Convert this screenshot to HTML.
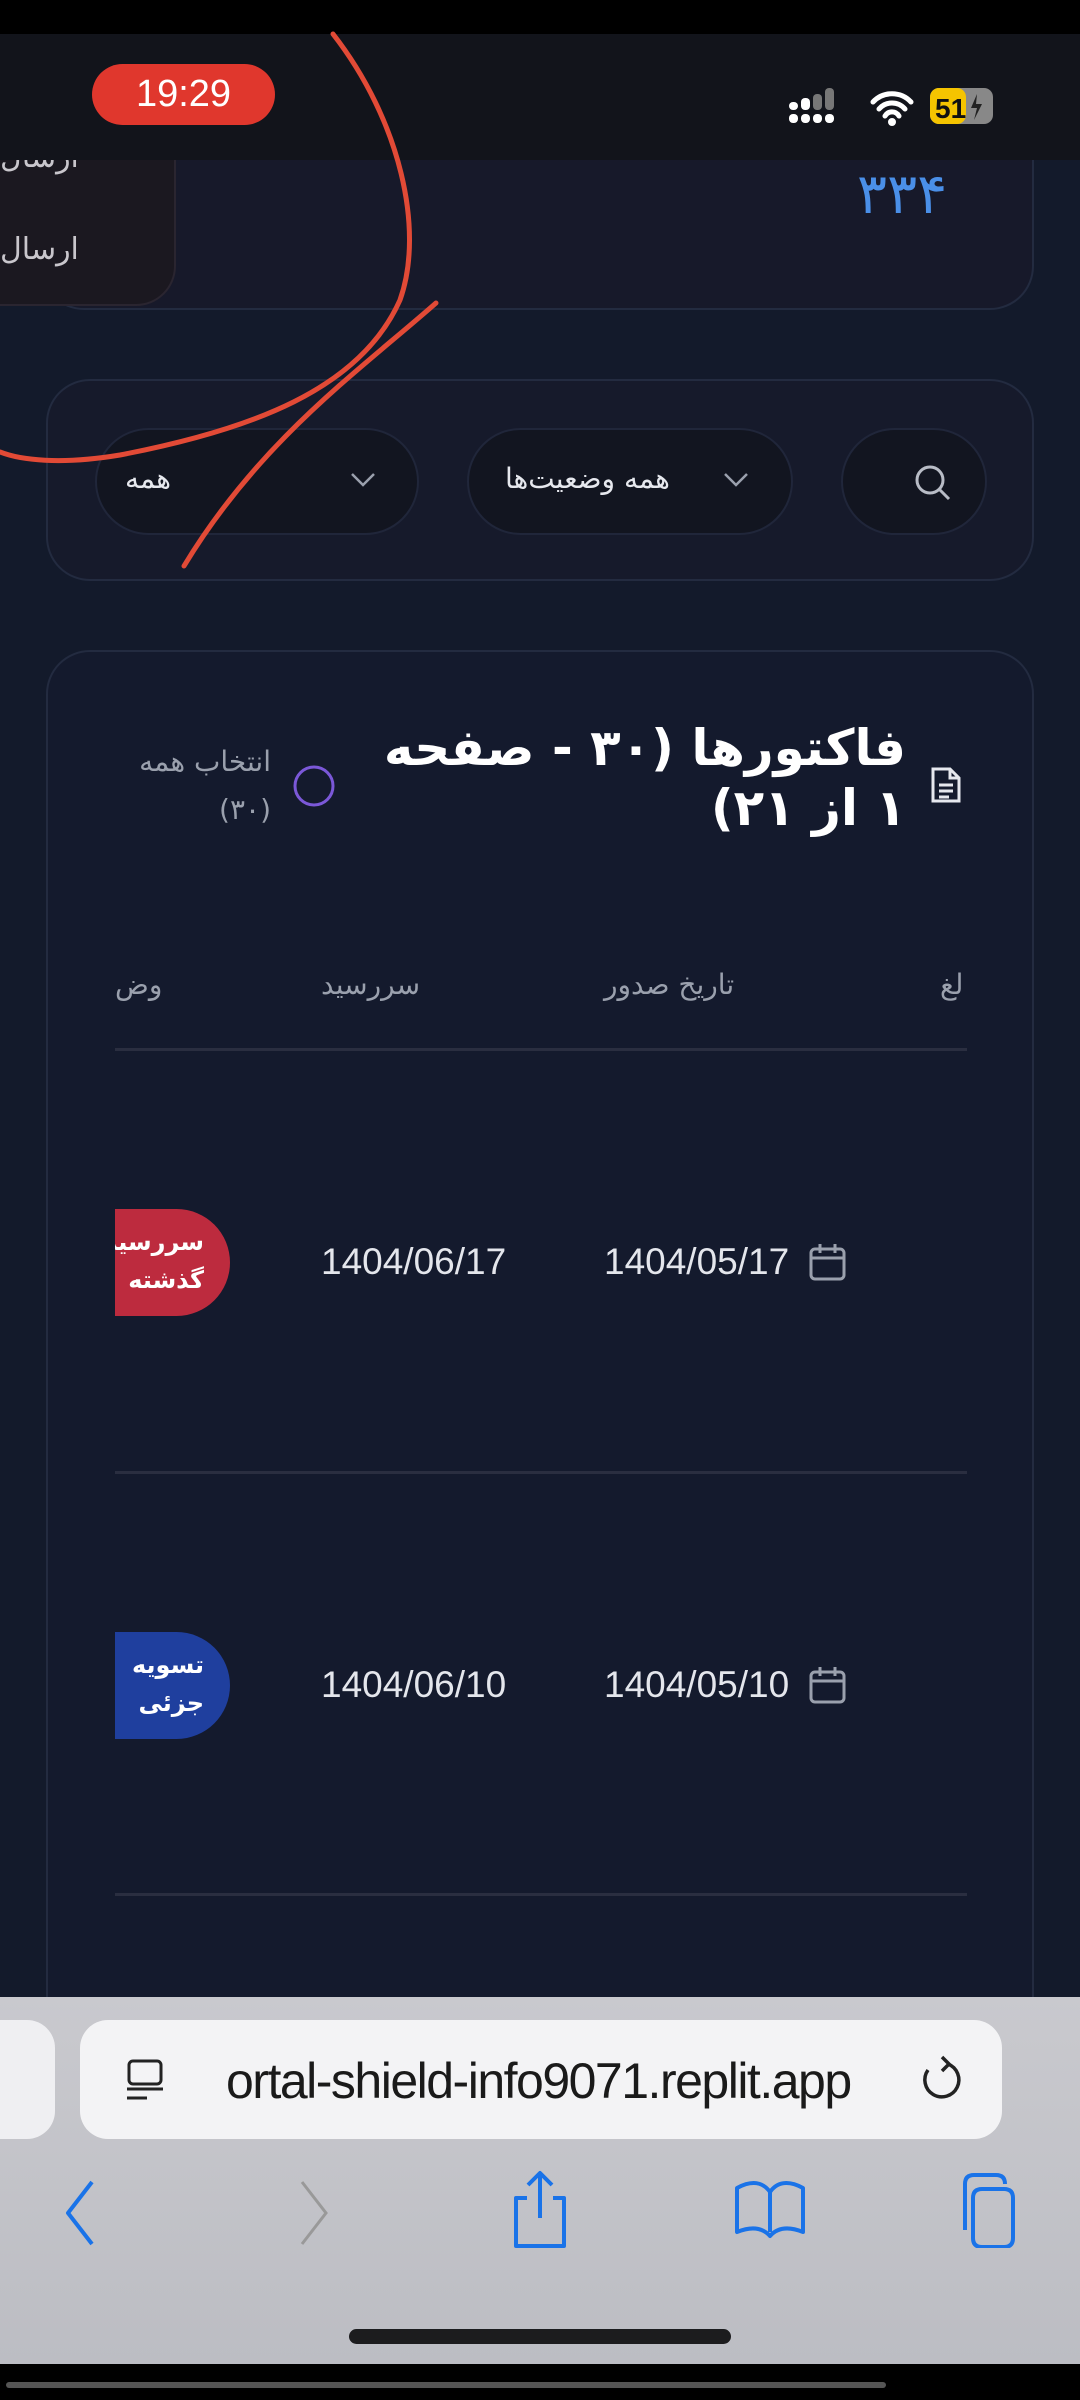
<!DOCTYPE html>
<html><head><meta charset="utf-8">
<style>
*{margin:0;padding:0;box-sizing:border-box}
body{width:1080px;height:2400px;background:#131a2b;position:relative;overflow:hidden;font-family:"Liberation Sans","DejaVu Sans",sans-serif;color:#e6e8ee}
.a{position:absolute}
.fa{font-family:"DejaVu Sans","Liberation Sans",sans-serif;direction:rtl;white-space:nowrap}
.card{border:2px solid #232b40;border-radius:44px}
.pill{background:#121520;border:2px solid #20263a;border-radius:54px}
.date{font-size:37px;color:#e4e6ec}
.hdr{font-size:28px;color:#9aa0ad}
.line{height:3px;background:#2a2e40;left:115px;width:852px}
</style></head><body>
<div class="a" style="left:0;top:0;width:1080px;height:34px;background:#000"></div>
<!-- top card -->
<div class="a card" style="left:40px;top:100px;width:994px;height:210px;background:#17192a;border-top:none;border-radius:0 0 44px 44px"></div>
<div class="a" style="left:0;top:100px;width:176px;height:206px;background:#1b1820;border:2px solid #2a2530;border-left:none;border-top:none;border-radius:0 0 40px 0"></div>
<div class="a fa" style="left:0;top:140px;font-size:30px;color:#c9c6cc">ارسال</div>
<div class="a fa" style="left:0;top:232px;font-size:30px;color:#c9c6cc">ارسال</div>
<div class="a fa" style="left:857px;top:162px;font-size:56px;color:#4a8fe8">۳۳۴</div>
<div class="a" style="left:0;top:34px;width:1080px;height:126px;background:#12141b"></div>
<div class="a" style="left:92px;top:64px;width:183px;height:61px;border-radius:31px;background:#e0372d;color:#fff;font-size:38px;text-align:center;line-height:61px">19:29</div>
<!-- status icons -->
<svg class="a" style="left:785px;top:84px" width="230" height="46" viewBox="0 0 230 46">
<g fill="#fff"><rect x="4" y="18" width="9" height="8" rx="4"/><rect x="4" y="30" width="9" height="9" rx="4"/><rect x="16" y="14" width="9" height="12" rx="4"/><rect x="16" y="30" width="9" height="9" rx="4"/><rect x="28" y="30" width="9" height="9" rx="4"/><rect x="40" y="30" width="9" height="9" rx="4"/></g>
<g fill="#777"><rect x="28" y="10" width="9" height="16" rx="4"/><rect x="40" y="4" width="9" height="22" rx="4"/></g>
<path d="M88 18a26 26 0 0 1 38 0M94 25a17 17 0 0 1 26 0M100 32a8 8 0 0 1 14 0" stroke="#fff" stroke-width="5" fill="none" stroke-linecap="round"/><circle cx="107" cy="38" r="4" fill="#fff"/>
<rect x="145" y="4" width="63" height="36" rx="9" fill="#888"/><rect x="145" y="4" width="36" height="36" rx="9" fill="#f5c400"/>
<text x="150" y="34" font-size="28" font-weight="bold" fill="#111" font-family="Liberation Sans">51</text>
<path d="M192 10l-6 14h6l-3 12 8-16h-6z" fill="#222"/>
</svg>
<!-- filter card -->
<div class="a card" style="left:46px;top:379px;width:988px;height:202px;background:#161a2b"></div>
<div class="a pill" style="left:95px;top:428px;width:324px;height:107px"></div>
<div class="a fa" style="left:125px;top:462px;font-size:28px">همه</div>
<svg class="a" style="left:348px;top:470px" width="30" height="20"><path d="M4 4l11 11 11-11" stroke="#9aa0ad" stroke-width="2.5" fill="none"/></svg>
<div class="a pill" style="left:467px;top:428px;width:326px;height:107px"></div>
<div class="a fa" style="left:505px;top:462px;font-size:28px">همه وضعیت‌ها</div>
<svg class="a" style="left:721px;top:470px" width="30" height="20"><path d="M4 4l11 11 11-11" stroke="#9aa0ad" stroke-width="2.5" fill="none"/></svg>
<div class="a pill" style="left:841px;top:428px;width:146px;height:107px"></div>
<svg class="a" style="left:912px;top:462px" width="44" height="44"><circle cx="18" cy="18" r="13" stroke="#b8bcc6" stroke-width="3" fill="none"/><path d="M28 28l9 9" stroke="#b8bcc6" stroke-width="3"/></svg>
<!-- main card -->
<div class="a card" style="left:46px;top:650px;width:988px;height:1400px;background:#141a2d"></div>
<svg class="a" style="left:930px;top:766px" width="32" height="38"><path d="M3 3h17l9 9v23H3z M20 3v9h9" stroke="#e6e8ee" stroke-width="3" fill="none"/><path d="M9 19h14M9 25h14M9 31h10" stroke="#e6e8ee" stroke-width="3"/></svg>
<div class="a fa" style="right:174px;top:718px;font-size:50px;font-weight:bold;color:#fff;text-align:right;line-height:60px">فاکتورها (۳۰ - صفحه<br>۱ از ۲۱)</div>
<svg class="a" style="left:291px;top:763px" width="46" height="46"><circle cx="23" cy="23" r="19" stroke="#7b58d8" stroke-width="3" fill="none"/></svg>
<div class="a fa" style="right:809px;top:738px;font-size:28px;color:#9aa0ad;text-align:right;line-height:48px">انتخاب همه<br>(۳۰)</div>
<div class="a fa hdr" style="left:940px;top:968px">لغ</div>
<div class="a fa hdr" style="left:604px;top:968px">تاریخ صدور</div>
<div class="a fa hdr" style="left:321px;top:968px">سررسید</div>
<div class="a fa hdr" style="left:115px;top:968px">وض</div>
<div class="a line" style="top:1048px"></div>
<!-- row 1 -->
<div class="a" style="left:115px;top:1209px;width:115px;height:107px;background:#bd2b3e;border-radius:0 54px 54px 0;overflow:hidden"><div class="fa" style="position:absolute;right:26px;top:14px;font-size:24px;font-weight:bold;color:#fff;line-height:38px;text-align:right">سررسید<br>گذشته</div></div>
<div class="a date" style="left:321px;top:1241px">1404/06/17</div>
<div class="a date" style="left:604px;top:1241px">1404/05/17</div>
<svg class="a" style="left:808px;top:1242px" width="40" height="40"><rect x="3" y="7" width="33" height="30" rx="4" stroke="#9aa0ad" stroke-width="3" fill="none"/><path d="M3 16h33M12 2v9M27 2v9" stroke="#9aa0ad" stroke-width="3"/></svg>
<div class="a line" style="top:1471px"></div>
<!-- row 2 -->
<div class="a" style="left:115px;top:1632px;width:115px;height:107px;background:#1f3f9e;border-radius:0 54px 54px 0;overflow:hidden"><div class="fa" style="position:absolute;right:26px;top:14px;font-size:24px;font-weight:bold;color:#fff;line-height:38px;text-align:right">تسویه<br>جزئی</div></div>
<div class="a date" style="left:321px;top:1664px">1404/06/10</div>
<div class="a date" style="left:604px;top:1664px">1404/05/10</div>
<svg class="a" style="left:808px;top:1665px" width="40" height="40"><rect x="3" y="7" width="33" height="30" rx="4" stroke="#9aa0ad" stroke-width="3" fill="none"/><path d="M3 16h33M12 2v9M27 2v9" stroke="#9aa0ad" stroke-width="3"/></svg>
<div class="a line" style="top:1893px"></div>
<!-- safari -->
<div class="a" style="left:0;top:1997px;width:1080px;height:367px;background:linear-gradient(#c9c9ce,#bcbdc3)"></div>
<div class="a" style="left:-30px;top:2020px;width:85px;height:119px;border-radius:28px;background:#efeff2"></div>
<div class="a" style="left:80px;top:2020px;width:922px;height:119px;border-radius:28px;background:#f3f3f5"></div>
<svg class="a" style="left:124px;top:2058px" width="44" height="46"><rect x="5" y="3" width="32" height="23" rx="4" stroke="#222" stroke-width="3" fill="none"/><path d="M3 31h36M3 40h20" stroke="#222" stroke-width="3"/></svg>
<div class="a" style="left:226px;top:2052px;font-size:50px;color:#1a1a1a;letter-spacing:-1.5px">ortal-shield-info9071.replit.app</div>
<svg class="a" style="left:918px;top:2054px" width="46" height="52"><path d="M30 10A17 17 0 1 1 10 16" stroke="#222" stroke-width="3.5" fill="none"/><path d="M24 3l7 7-7 7" stroke="#222" stroke-width="3.5" fill="none"/></svg>
<svg class="a" style="left:0;top:2168px" width="1080" height="80"><g stroke="#1a73e8" stroke-width="4" fill="none" stroke-linejoin="round">
<path d="M92 14L68 45l24 31"/>
<path d="M527 30h-11v48h48V30h-11M540 6v44M528 17l12-12 12 12"/>
<path d="M737 64V20c15-8 26-6 33 4 7-10 18-12 33-4v44c-15-6-26-4-33 4-7-8-18-10-33-4zM770 24v40"/>
<path d="M965 62V16c0-6 3-9 9-9h22c6 0 9 3 9 9M973 30c0-6 3-9 9-9h22c6 0 9 3 9 9v40c0 6-3 9-9 9h-22c-6 0-9-3-9-9z"/></g>
<path d="M302 14l24 31-24 31" stroke="#999" stroke-width="3" fill="none"/></svg>
<div class="a" style="left:349px;top:2329px;width:382px;height:15px;border-radius:8px;background:#1c1c1e"></div>
<div class="a" style="left:0;top:2364px;width:1080px;height:36px;background:#000"></div>
<div class="a" style="left:6px;top:2382px;width:880px;height:6px;border-radius:3px;background:#555"></div>
<!-- red annotation -->
<svg class="a" style="left:0;top:0" width="1080" height="700"><g stroke="#e24a36" stroke-width="5" fill="none" stroke-linecap="round">
<path d="M333 34C400 120 425 230 400 300C360 390 250 430 120 455C60 465 20 460 0 452"/>
<path d="M436 303C360 370 260 440 184 566"/></g></svg>
</body></html>
